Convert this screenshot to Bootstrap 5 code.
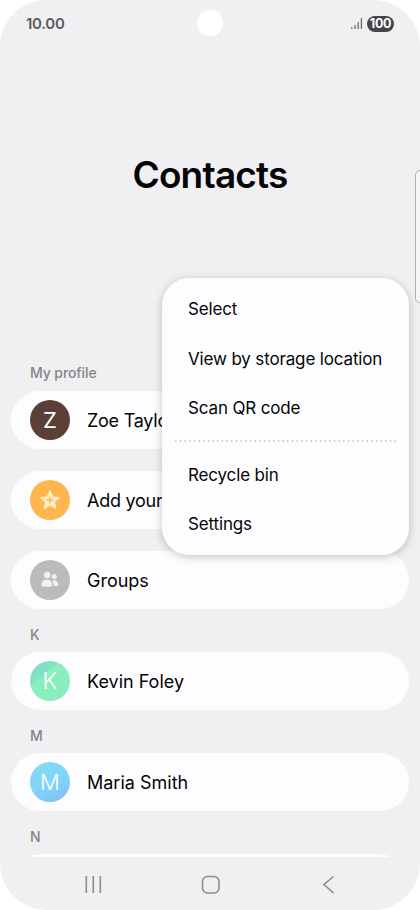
<!DOCTYPE html>
<html lang="en">
<head>
<meta charset="utf-8">
<meta name="viewport" content="width=device-width, initial-scale=1">
<title>Contacts</title>
<link href="https://cdn.jsdelivr.net/npm/bootstrap@5.3.0/dist/css/bootstrap.min.css" rel="stylesheet">
<style>
body{font-family:Inter,"Liberation Sans",sans-serif;background:#fff;color:#050506}
.phone{width:420px;height:910px;background:#f0f0f2;border-radius:47px}
.status{height:48px;padding:0 26px;color:#5b5b5d}
.clock{font-size:15px;font-weight:600;letter-spacing:-.3px}
.camera{width:26px;height:26px;left:197px;top:10px}
.battery{width:27px;height:16px;font-size:12.5px;font-weight:700;background:#454547;color:#fff;letter-spacing:-.3px}
.app-title{height:254px;font-size:37px;font-weight:600;letter-spacing:-.8px;color:#050506}
.label-row{height:43px;padding:8px 0 0 19px;font-size:14px;font-weight:500;color:#858587}
.label-row.lab-first{height:89px;padding-top:52px;letter-spacing:-.1px}
.contacts{padding:0 11px}
.entry{height:58px;border-radius:29px;background:#fdfdff;padding-left:19px;gap:17px;font-size:18px;letter-spacing:0}
.entry.spaced{margin-bottom:22px;letter-spacing:-.25px}
.avatar{width:40px;height:40px;color:#fff;font-size:22px;letter-spacing:0}
.av-z{background:#5b4038}
.av-star{background:#ffb64f}
.av-group{background:#bbb}
.av-k{background:linear-gradient(140deg,#7bdcc8 0,#83e2c2 33%,#8aeebc 35%,#8aeebc 100%);font-weight:300;font-size:23px}
.av-m{background:linear-gradient(155deg,#86d9f4 0,#7fd3f8 60%,#86b4f7 100%);font-weight:300}
.peek{height:3px;margin:0 19px;background:#fff;border-radius:18px 18px 0 0/3px 3px 0 0}
.softkeys{height:53px}
.edge-panel{left:415px;top:170px;width:12px;height:133px;border:1px solid #b0b0b2;border-radius:5px;background:#f7f7f9}
.popup{left:162px;top:278px;width:247px;height:277px;border-radius:27px;background:#fdfdff;box-shadow:0 2px 10px rgba(0,0,0,.22);padding:7px 0;font-size:17px;letter-spacing:-.15px}
.popup-item{height:49.5px;padding-left:26px}
.dots{height:17px;padding-bottom:2px;margin:0 12px 0 13px}
</style>
</head>
<body>
<main class="phone position-relative overflow-hidden d-flex flex-column">
  <header class="status d-flex align-items-center justify-content-between flex-shrink-0">
    <span class="clock">10.00</span>
    <span class="camera position-absolute rounded-circle bg-white"></span>
    <span class="d-flex align-items-center">
      <svg class="me-1" width="13" height="14" viewBox="0 0 13 14" stroke="#69696b" stroke-width="1.3" stroke-linecap="round"><path d="M1.8 10.700v.7M5 8.500v2.900M8.200 5.700v5.700M11.400 1.500v9.900"/></svg>
      <span class="battery rounded-pill d-flex align-items-center justify-content-center">100</span>
    </span>
  </header>
  <h1 class="app-title m-0 d-flex align-items-center justify-content-center flex-shrink-0">Contacts</h1>
  <section class="contacts flex-shrink-0">
    <div class="label-row lab-first d-flex align-items-center">My profile</div>
    <div class="entry spaced d-flex align-items-center"><span class="avatar av-z rounded-circle d-flex align-items-center justify-content-center">Z</span><span>Zoe Taylor</span></div>
    <div class="entry spaced d-flex align-items-center"><span class="avatar av-star rounded-circle d-flex align-items-center justify-content-center"><svg width="22" height="22" viewBox="0 0 20 20"><path d="M10 1.500l2.500 5.600 6 .6-4.500 4 1.300 6-5.300-3.100-5.300 3.100 1.300-6-4.500-4 6-.6z" fill="#ffebc8" stroke="#ffebc8" stroke-linejoin="round"/><path d="M10 7v6M7 10h6" stroke="#ffb64f" stroke-width="1.300"/></svg></span><span>Add your favourites</span></div>
    <div class="entry d-flex align-items-center"><span class="avatar av-group rounded-circle d-flex align-items-center justify-content-center"><svg width="20" height="20" viewBox="0 0 20 20" fill="#f0f0f0"><circle cx="7.200" cy="5" r="3.200"/><circle cx="14.300" cy="6.600" r="2.500"/><path d="M1.500 14.800c0-3.200 2.300-5.200 5.400-5.200s5.400 2 5.400 5.200c0 1.500-.8 2-2.200 2H3.700c-1.400 0-2.200-.5-2.200-2zM12.100 10.500c3.400-1 6.200.8 6.200 3.900 0 1.200-.7 1.700-1.700 1.700h-2.900c.3-2.300-.3-4.200-1.600-5.600z"/></svg></span><span>Groups</span></div>
    <div class="label-row d-flex align-items-center">K</div>
    <div class="entry d-flex align-items-center"><span class="avatar av-k rounded-circle d-flex align-items-center justify-content-center">K</span><span>Kevin Foley</span></div>
    <div class="label-row d-flex align-items-center">M</div>
    <div class="entry d-flex align-items-center"><span class="avatar av-m rounded-circle d-flex align-items-center justify-content-center">M</span><span>Maria Smith</span></div>
    <div class="label-row d-flex align-items-center">N</div>
    <div class="peek"></div>
  </section>
  <nav class="softkeys d-flex align-items-center flex-shrink-0" aria-label="Navigation">
    <svg width="420" height="53" viewBox="0 0 420 53" fill="none" stroke="#8c8c8e" stroke-width="1.600"><path d="M86.300 19v17M93.300 19v17M100.300 19v17"/><rect x="202.500" y="19.500" width="16.500" height="16.500" rx="5"/><path d="M333.500 19.500l-9.500 8 9.500 8.500"/></svg>
  </nav>
  <aside class="edge-panel position-absolute"></aside>
  <div class="popup position-absolute" role="menu">
    <div class="popup-item d-flex align-items-center">Select</div>
    <div class="popup-item d-flex align-items-center">View by storage location</div>
    <div class="popup-item d-flex align-items-center">Scan QR code</div>
    <div class="dots d-flex align-items-center"><svg width="222" height="2"><path d="M0 1h222" stroke="#c2c2c4" stroke-width="1.600" stroke-dasharray="1.600 3.070"/></svg></div>
    <div class="popup-item d-flex align-items-center">Recycle bin</div>
    <div class="popup-item d-flex align-items-center">Settings</div>
  </div>
</main>
<script src="https://cdn.jsdelivr.net/npm/bootstrap@5.3.0/dist/js/bootstrap.bundle.min.js"></script>
</body>
</html>
